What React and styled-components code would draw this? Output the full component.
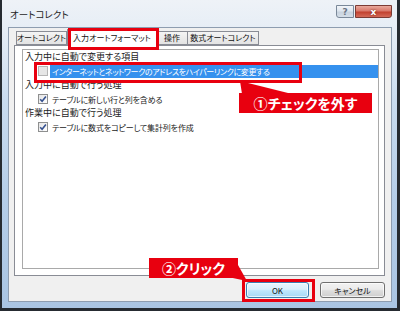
import React from 'react';
import styled, { createGlobalStyle } from 'styled-components';

const FONT = `"Noto Sans CJK JP", "Noto Sans", sans-serif`;

const Global = createGlobalStyle`
  html, body { margin: 0; padding: 0; background: #ffffff; }
  body { font-family: ${FONT}; }
  * { box-sizing: border-box; }
`;

const Window = styled.div`
  position: relative;
  width: 400px;
  height: 311px;
  border-style: solid;
  border-color: #262b31;
  border-width: 0 3px 3px 2px;
  padding: 0 5px 6px 6px;
  background: linear-gradient(#eef2f7 0px, #e7eef6 27px, #cadcef 100px, #b4cde8 200px, #aac5e3 100%);
  display: flex;
  flex-direction: column;
  font-family: ${FONT};
  font-feature-settings: "palt";
  color: #1a1a1a;
`;

const TitleBar = styled.div`
  height: 27px;
  display: flex;
  align-items: flex-start;
`;

const Title = styled.div`
  font-size: 9.5px;
  line-height: 12px;
  margin-top: 8px;
  padding-left: 2px;
  color: #1e1e1e;
`;

const CaptionButtons = styled.div`
  margin-left: auto;
  margin-top: 5px;
  display: flex;
  gap: 1px;
`;

const CaptionButton = styled.div`
  height: 13px;
  width: ${p => p.$w}px;
  display: flex;
  align-items: center;
  justify-content: center;
  font-family: "DejaVu Sans", sans-serif;
  font-weight: bold;
  font-size: 9px;
  border: 1px solid ${p => (p.$close ? '#7b3a33' : '#7a8899')};
  border-radius: ${p => (p.$close ? '0 0 3px 0' : '0 0 0 3px')};
  color: ${p => (p.$close ? '#ffffff' : '#6a7584')};
  background: ${p =>
    p.$close
      ? 'linear-gradient(#e9a99c 0%, #d9786a 45%, #c2412f 55%, #d46a58 100%)'
      : 'linear-gradient(#f2f5f9 0%, #dde5ee 45%, #c8d3df 55%, #d5dee8 100%)'};
  text-shadow: ${p => (p.$close ? '0 0 2px #5a1a12' : 'none')};
`;

const Client = styled.div`
  flex: 1;
  border: 1px solid #8e9db0;
  background: #f0f0f0;
  padding: 3px 6px 0 5px;
  display: flex;
  flex-direction: column;
`;

const TabStrip = styled.div`
  height: 14px;
  display: flex;
  align-items: flex-end;
  padding-left: 2px;
  position: relative;
  z-index: 1;
`;

const Tab = styled.div`
  width: ${p => p.$w}px;
  height: ${p => (p.$active ? 17 : 14)}px;
  margin-bottom: ${p => (p.$active ? -1 : 0)}px;
  border: 1px solid #898c95;
  border-bottom: ${p => (p.$active ? 'none' : '1px solid #898c95')};
  border-left-width: ${p => (p.$first || p.$active ? 1 : 0)}px;
  background: ${p => (p.$active ? '#ffffff' : 'linear-gradient(#f4f4f4, #e3e3e3)')};
  font-size: 8px;
  line-height: 12px;
  display: flex;
  align-items: ${p => (p.$active ? 'flex-start' : 'center')};
  padding-top: ${p => (p.$active ? 2 : 0)}px;
  justify-content: center;
  white-space: nowrap;
  color: #111;
`;

const TabPage = styled.div`
  height: 231px;
  border: 1px solid #898c95;
  background: #ffffff;
  padding: 3px 5px 6px 7px;
  display: flex;
`;

const Panel = styled.div`
  flex: 1;
  border: 1px solid #a9a9a9;
  background: #ffffff;
  display: flex;
  flex-direction: column;
`;

const Heading = styled.div`
  height: 14px;
  line-height: 14px;
  font-size: 9px;
  padding-left: 2px;
  white-space: nowrap;
  color: #1a1a1a;
`;

const Row = styled.div`
  height: 14px;
  display: flex;
  align-items: center;
  padding-left: 15px;
`;

const Box = styled.div`
  width: 10px;
  height: 10px;
  border: 1px solid ${p => (p.$dim ? '#b5b5b5' : '#8e8f8f')};
  background: ${p => (p.$dim ? '#e6e6e6' : 'linear-gradient(135deg, #e4e4e4, #ffffff)')};
  display: flex;
  align-items: center;
  justify-content: center;
  flex: none;
`;

const Label = styled.div`
  flex: 1;
  height: 13px;
  margin-left: 2px;
  padding-left: 2px;
  font-size: 8px;
  letter-spacing: ${p => (p.$selected ? -0.4 : -0.15)}px;
  line-height: 13px;
  white-space: nowrap;
  background: ${p => (p.$selected ? '#3591ee' : 'transparent')};
  color: ${p => (p.$selected ? '#ffffff' : '#1a1a1a')};
`;

const ButtonRow = styled.div`
  display: flex;
  justify-content: flex-end;
  gap: 11px;
  padding-top: 6px;
`;

const Button = styled.div`
  width: ${p => p.$w}px;
  height: 16px;
  border: 1px solid ${p => (p.$default ? '#3c7fb1' : '#707070')};
  border-radius: 3px;
  display: flex;
  align-items: center;
  justify-content: center;
  font-size: 8px;
  color: #111;
  background: ${p =>
    p.$default
      ? 'linear-gradient(#eaf6fd 0%, #d9f0fc 45%, #bee6fd 55%, #a7d9f5 100%)'
      : 'linear-gradient(#f2f2f2 0%, #ebebeb 45%, #dddddd 55%, #cfcfcf 100%)'};
  box-shadow: inset 0 0 0 1px rgba(255, 255, 255, 0.7);
`;

const Mark = styled.div`
  position: absolute;
  left: ${p => p.$x}px;
  top: ${p => p.$y}px;
  width: ${p => p.$w}px;
  height: ${p => p.$h}px;
  border: 3px solid #e8000f;
  pointer-events: none;
  z-index: 5;
`;

const Callout = styled.div`
  position: absolute;
  left: ${p => p.$x}px;
  top: ${p => p.$y}px;
  width: ${p => p.$w}px;
  height: ${p => p.$h}px;
  background: #e8000f;
  color: #ffffff;
  font-weight: bold;
  font-size: 14px;
  line-height: ${p => p.$h}px;
  text-align: center;
  white-space: nowrap;
  z-index: 6;
`;

const Pointer = styled.svg`
  position: absolute;
  left: 0;
  top: 0;
  z-index: 6;
  pointer-events: none;
`;

const Check = () => (
  <svg width="8" height="8" viewBox="0 0 8 8">
    <path d="M1.2 4.2 L3.1 6.2 L6.9 1.4" fill="none" stroke="#35518f" strokeWidth="1.6" />
  </svg>
);

export default function App() {
  return (
    <>
      <Global />
      <Window>
        <TitleBar>
          <Title>オートコレクト</Title>
          <CaptionButtons>
            <CaptionButton $w={18}>?</CaptionButton>
            <CaptionButton $w={37} $close>x</CaptionButton>
          </CaptionButtons>
        </TitleBar>
        <Client>
          <TabStrip>
            <Tab $w={51} $first>オートコレクト</Tab>
            <Tab $w={90} $active>入力オートフォーマット</Tab>
            <Tab $w={31}>操作</Tab>
            <Tab $w={71}>数式オートコレクト</Tab>
          </TabStrip>
          <TabPage>
            <Panel>
              <Heading>入力中に自動で変更する項目</Heading>
              <Row>
                <Box $dim />
                <Label $selected>インターネットとネットワークのアドレスをハイパーリンクに変更する</Label>
              </Row>
              <Heading>入力中に自動で行う処理</Heading>
              <Row>
                <Box><Check /></Box>
                <Label>テーブルに新しい行と列を含める</Label>
              </Row>
              <Heading>作業中に自動で行う処理</Heading>
              <Row>
                <Box><Check /></Box>
                <Label>テーブルに数式をコピーして集計列を作成</Label>
              </Row>
            </Panel>
          </TabPage>
          <ButtonRow>
            <Button $w={63} $default>OK</Button>
            <Button $w={65}>キャンセル</Button>
          </ButtonRow>
        </Client>
        <Mark $x={66} $y={28} $w={91} $h={22} />
        <Mark $x={32} $y={62} $w={268} $h={21} />
        <Mark $x={240} $y={279} $w={73} $h={23} />
        <Pointer width="400" height="311" viewBox="0 0 400 311">
          <polygon points="238,81 240,94 290,94" fill="#e8000f" />
          <polygon points="226,277 236,265 245,281" fill="#e8000f" />
        </Pointer>
        <Callout $x={237} $y={93} $w={133} $h={20}>①チェックを外す</Callout>
        <Callout $x={147} $y={258} $w={89} $h={20}>②クリック</Callout>
      </Window>
    </>
  );
}
